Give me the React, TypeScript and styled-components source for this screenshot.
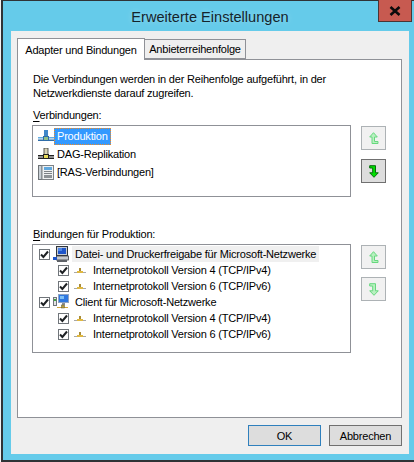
import React from 'react';
import styled, { createGlobalStyle } from 'styled-components';

const GlobalStyle = createGlobalStyle`
  html, body {
    margin: 0;
    padding: 0;
    background: #f2f2f2;
  }
  body {
    font-family: 'Liberation Sans', Arial, sans-serif;
    font-size: 11px;
    letter-spacing: -0.2px;
    color: #000;
  }
`;

const Window = styled.div`
  box-sizing: border-box;
  width: 413px;
  height: 462px;
  margin-left: 1px;
  padding: 0 5px 6px 8px;
  display: flex;
  flex-direction: column;
  position: relative;
  background: #65cbea;
  border-left: 2px solid #2f3336;
  border-top: 1px solid #2f3336;
  border-bottom: 2px solid #2f3336;
`;

const TitleBar = styled.div`
  height: 30px;
  display: flex;
  align-items: center;
  justify-content: center;
  font-size: 14.6px;
  letter-spacing: 0;
  color: #14242c;
  text-shadow: 0 0 6px rgba(255, 255, 255, 0.35);
  flex-shrink: 0;
  padding-top: 1px;
  box-sizing: border-box;
`;

const CloseButton = styled.button`
  position: absolute;
  top: -1px;
  right: 2px;
  width: 34px;
  height: 22px;
  padding: 0;
  display: flex;
  align-items: center;
  justify-content: center;
  background: #c75a50;
  border: 1px solid #4a3434;
  border-top: none;
`;

const Panel = styled.div`
  flex: 1;
  background: #efefef;
  padding: 7px 7px 8px 6px;
  display: flex;
  flex-direction: column;
`;

const TabStrip = styled.div`
  display: flex;
  align-items: flex-end;
  height: 21px;
  position: relative;
  z-index: 1;
`;

const Tab = styled.div<{ $active?: boolean }>`
  box-sizing: border-box;
  display: flex;
  align-items: center;
  justify-content: center;
  width: ${(p) => (p.$active ? '128px' : '101px')};
  height: ${(p) => (p.$active ? '22px' : '20px')};
  margin-bottom: ${(p) => (p.$active ? '-1px' : '0')};
  background: ${(p) => (p.$active ? '#fff' : '#efefef')};
  border: 1px solid #8f9197;
  border-bottom: ${(p) => (p.$active ? 'none' : '1px solid #8f9197')};
  border-left: ${(p) => (p.$active ? '1px solid #8f9197' : 'none')};
  white-space: nowrap;
`;

const TabBody = styled.div`
  box-sizing: border-box;
  height: 359px;
  background: #fff;
  border: 1px solid #8f9197;
  padding: 12px 15px 0 14px;
`;

const Description = styled.p`
  margin: 0 0 7px 1px;
  line-height: 14px;
  white-space: nowrap;
`;

const FieldLabel = styled.div<{ $gap?: number }>`
  margin: ${(p) => p.$gap ?? 0}px 0 2px 1px;
  line-height: 16px;
  u {
    text-decoration: underline;
    text-underline-offset: 2px;
  }
`;

const ListRow = styled.div`
  display: flex;
  gap: 10px;
`;

const ListBox = styled.div<{ $height: number; $pad: number }>`
  box-sizing: border-box;
  width: 321px;
  height: ${(p) => p.$height}px;
  padding: ${(p) => p.$pad}px 0 0 5px;
  border: 1px solid #8f9197;
  background: #fff;
`;

const MoveButtons = styled.div<{ $gap: number }>`
  display: flex;
  flex-direction: column;
  gap: ${(p) => p.$gap}px;
  padding-top: 1px;
`;

const MoveButton = styled.button<{ $enabled?: boolean }>`
  box-sizing: border-box;
  width: 25px;
  height: 24px;
  padding: 0;
  display: flex;
  align-items: center;
  justify-content: center;
  background: ${(p) => (p.$enabled ? '#dddddd' : '#f1f1f1')};
  border: 1px solid ${(p) => (p.$enabled ? '#707070' : '#adb2b5')};
`;

const ConnectionRow = styled.div`
  display: flex;
  align-items: center;
  height: 18px;
`;

const ConnectionName = styled.span<{ $selected?: boolean }>`
  box-sizing: border-box;
  height: 17px;
  line-height: 15px;
  padding: 0 2px;
  white-space: nowrap;
  background: ${(p) => (p.$selected ? '#3399ff' : 'transparent')};
  color: ${(p) => (p.$selected ? '#fff' : '#000')};
  border: 1px ${(p) => (p.$selected ? 'dotted #f08a24' : 'solid transparent')};
`;

const BindingRow = styled.div<{ $child?: boolean }>`
  display: flex;
  align-items: center;
  height: 16px;
  padding-left: ${(p) => (p.$child ? '20px' : '1px')};
`;

const Check = styled.span`
  box-sizing: border-box;
  width: 11px;
  height: 11px;
  flex-shrink: 0;
  display: flex;
  align-items: center;
  justify-content: center;
  background: #fff;
  border: 1px solid #70757a;
`;

const IconSlot = styled.span<{ $child?: boolean }>`
  width: ${(p) => (p.$child ? 13 : 16)}px;
  margin-left: ${(p) => (p.$child ? 4 : 3)}px;
  height: 16px;
  flex-shrink: 0;
  display: flex;
  align-items: center;
  justify-content: center;
`;

const BindingName = styled.span<{ $focused?: boolean; $child?: boolean }>`
  margin-left: ${(p) => (p.$child ? 5 : 3)}px;
  padding: 0 ${(p) => (p.$child ? 2 : 3)}px;
  line-height: 16px;
  white-space: nowrap;
  background: ${(p) => (p.$focused ? '#f0f0f0' : 'transparent')};
`;

const Footer = styled.div`
  display: flex;
  justify-content: flex-end;
  gap: 8px;
  margin-top: 7px;
`;

const DialogButton = styled.button<{ $primary?: boolean }>`
  box-sizing: border-box;
  width: 73px;
  height: 21px;
  padding: 0;
  font: inherit;
  letter-spacing: inherit;
  color: #000;
  background: #dddddd;
  border: 1px solid ${(p) => (p.$primary ? '#2f80bd' : '#707070')};
`;

const CheckMark = () => (
  <svg width="9" height="9" viewBox="0 0 9 9">
    <path d="M1 4.5 L3.4 7 L8 1.5" fill="none" stroke="#1e2124" strokeWidth="2" />
  </svg>
);

const NetIcon = ({ blue }: { blue?: boolean }) => (
  <svg width="16" height="12" viewBox="0 0 16 12">
    <rect x="6" y="0" width="4" height="8" fill={blue ? '#3f87c9' : '#d8d3b4'} stroke={blue ? 'none' : '#333'} strokeWidth="0.8" />
    <rect x="0" y="7" width="16" height="1.5" fill={blue ? '#66aee2' : '#222'} />
    <rect x="0" y="9.5" width="16" height="1.5" fill={blue ? '#2f6da8' : '#222'} />
    <rect x="5.5" y="6.5" width="5" height="4" fill={blue ? '#8fbf88' : '#e8dc5a'} stroke={blue ? '#2f6da8' : '#222'} />
  </svg>
);

const PhoneIcon = () => (
  <svg width="16" height="17" viewBox="0 0 16 17">
    <rect x="0.5" y="1.5" width="3.5" height="14" fill="#c9d0d6" stroke="#6f7478" />
    <rect x="4" y="1.5" width="11.5" height="14" fill="#eef0f1" stroke="#7d8286" />
    <rect x="6" y="3" width="8" height="3" fill="#5fa8de" />
    <rect x="6" y="7" width="8" height="1" fill="#7d8286" />
    <rect x="6" y="9" width="8" height="1" fill="#7d8286" />
    <rect x="6" y="11" width="8" height="3" fill="#8d9296" />
  </svg>
);

const ComputerIcon = () => (
  <svg width="16" height="16" viewBox="0 0 16 16">
    <rect x="3.5" y="0.5" width="11" height="9" fill="#c5ccd4" stroke="#30353c" />
    <rect x="5" y="2" width="8" height="6" fill="#1f55c9" />
    <rect x="5" y="2" width="4" height="3" fill="#4f86e6" />
    <rect x="3.5" y="10" width="12" height="4" fill="#c6c9cd" stroke="#3c3f45" strokeWidth="0.8" />
    <rect x="0" y="11" width="4" height="3" fill="#1f55c9" />
    <rect x="4" y="14" width="10" height="2" fill="#5d6167" />
  </svg>
);

const ClientIcon = () => (
  <svg width="16" height="16" viewBox="0 0 16 16">
    <rect x="0.5" y="3.5" width="3" height="8" fill="#e4e4e4" stroke="#70757a" />
    <rect x="1" y="5" width="2" height="2" fill="#3fa53f" />
    <rect x="5.5" y="0.5" width="10" height="8" fill="#2f78e0" stroke="#8fa4c4" />
    <rect x="7" y="2" width="4" height="3" fill="#7fc0f5" />
    <rect x="9" y="9" width="3" height="2" fill="#8b8f94" />
    <rect x="4" y="13" width="11" height="1" fill="#d4a63a" />
    <rect x="8.5" y="11" width="3" height="3" fill="#b59a3f" stroke="#5a5a3a" strokeWidth="0.5" />
  </svg>
);

const ProtocolIcon = () => (
  <svg width="12" height="7" viewBox="0 0 12 7">
    <rect x="5" y="1" width="2" height="3" fill="#a88c3a" />
    <rect x="0" y="5" width="12" height="1" fill="#a8a8a8" />
    <rect x="3" y="4" width="6" height="2" fill="#e0b840" />
  </svg>
);

const ArrowUp = () => (
  <svg width="10" height="13" viewBox="0 0 10 13">
    <path d="M4.5 0.7 L0.7 5 H3 V11.5 H9 V9.5 H5.5 V5 H8.3 Z" fill="#b8f0c0" stroke="#66d87e" />
  </svg>
);

const ArrowDown = ({ enabled }: { enabled?: boolean }) => (
  <svg width="10" height="13" viewBox="0 0 10 13">
    <path
      d="M0.7 0.7 H6.5 V7.8 H9.3 L5 12.3 L0.7 7.8 H3.7 V3 H0.7 Z"
      fill={enabled ? '#00e000' : '#b8f0c0'}
      stroke={enabled ? '#066b0c' : '#66d87e'}
    />
  </svg>
);

const CloseGlyph = () => (
  <svg width="12" height="10" viewBox="0 0 12 10">
    <path d="M1.5 1 L10.5 9 M10.5 1 L1.5 9" stroke="#0b0b0b" strokeWidth="2.6" />
  </svg>
);

const bindings = [
  { name: 'Datei- und Druckerfreigabe für Microsoft-Netzwerke', icon: <ComputerIcon />, focused: true },
  { name: 'Internetprotokoll Version 4 (TCP/IPv4)', child: true },
  { name: 'Internetprotokoll Version 6 (TCP/IPv6)', child: true },
  { name: 'Client für Microsoft-Netzwerke', icon: <ClientIcon /> },
  { name: 'Internetprotokoll Version 4 (TCP/IPv4)', child: true },
  { name: 'Internetprotokoll Version 6 (TCP/IPv6)', child: true },
];

const App = () => (
  <>
    <GlobalStyle />
    <Window>
      <TitleBar>Erweiterte Einstellungen</TitleBar>
      <CloseButton aria-label="Schließen">
        <CloseGlyph />
      </CloseButton>
      <Panel>
        <TabStrip>
          <Tab $active>Adapter und Bindungen</Tab>
          <Tab>Anbieterreihenfolge</Tab>
        </TabStrip>
        <TabBody>
          <Description>
            Die Verbindungen werden in der Reihenfolge aufgeführt, in der
            <br />
            Netzwerkdienste darauf zugreifen.
          </Description>
          <FieldLabel>
            <u>V</u>erbindungen:
          </FieldLabel>
          <ListRow>
            <ListBox $height={72} $pad={1}>
              <ConnectionRow>
                <NetIcon blue />
                <ConnectionName $selected>Produktion</ConnectionName>
              </ConnectionRow>
              <ConnectionRow>
                <NetIcon />
                <ConnectionName>DAG-Replikation</ConnectionName>
              </ConnectionRow>
              <ConnectionRow>
                <PhoneIcon />
                <ConnectionName>[RAS-Verbindungen]</ConnectionName>
              </ConnectionRow>
            </ListBox>
            <MoveButtons $gap={9}>
              <MoveButton>
                <ArrowUp />
              </MoveButton>
              <MoveButton $enabled>
                <ArrowDown enabled />
              </MoveButton>
            </MoveButtons>
          </ListRow>
          <FieldLabel $gap={29}>
            <u>B</u>indungen für Produktion:
          </FieldLabel>
          <ListRow>
            <ListBox $height={109} $pad={1}>
              {bindings.map((b, i) => (
                <BindingRow key={i} $child={b.child}>
                  <Check>
                    <CheckMark />
                  </Check>
                  <IconSlot $child={b.child}>{b.child ? <ProtocolIcon /> : b.icon}</IconSlot>
                  <BindingName $focused={b.focused} $child={b.child}>
                    {b.name}
                  </BindingName>
                </BindingRow>
              ))}
            </ListBox>
            <MoveButtons $gap={8}>
              <MoveButton>
                <ArrowUp />
              </MoveButton>
              <MoveButton>
                <ArrowDown />
              </MoveButton>
            </MoveButtons>
          </ListRow>
        </TabBody>
        <Footer>
          <DialogButton $primary>OK</DialogButton>
          <DialogButton>Abbrechen</DialogButton>
        </Footer>
      </Panel>
    </Window>
  </>
);

export default App;
